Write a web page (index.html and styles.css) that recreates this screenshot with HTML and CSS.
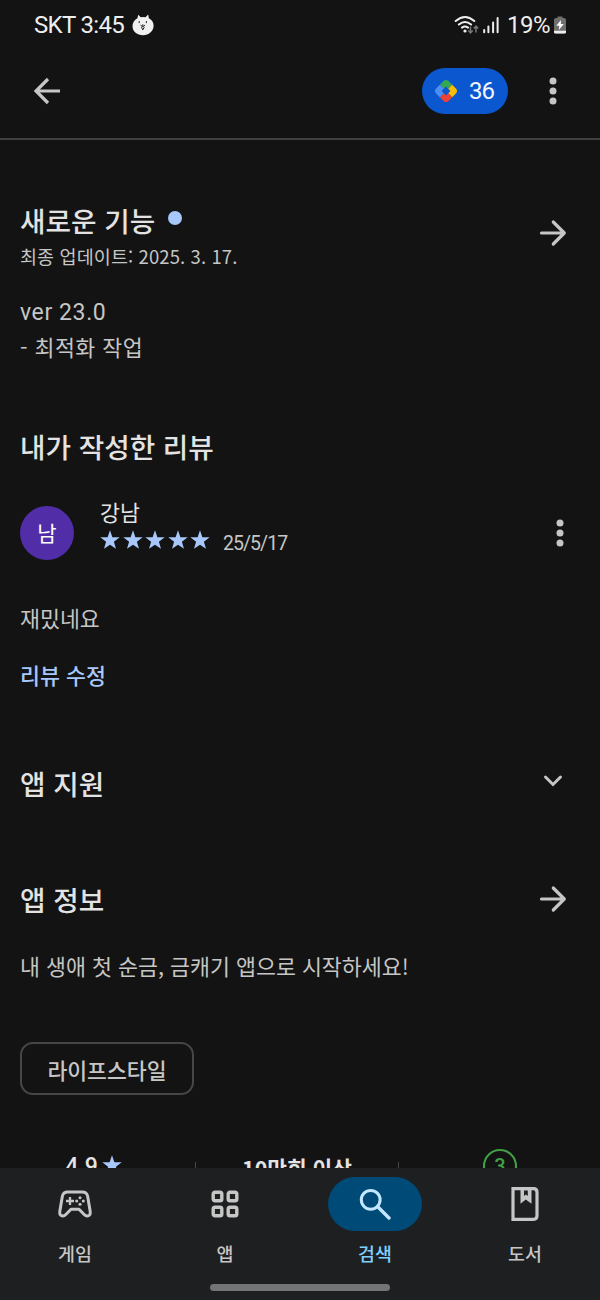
FILE: index.html
```
<!DOCTYPE html>
<html lang="ko">
<head>
<meta charset="utf-8">
<title>앱 세부정보</title>
<link rel="stylesheet" href="styles.css">
</head>
<body>
<svg class="defs" width="0" height="0">
  <symbol id="star" viewBox="0 0 20 20"><path d="M10 .3 12.4 7.2 19.7 7.3 13.9 11.7 16 18.8 10 14.7 4 18.8 6.1 11.7 .3 7.3 7.6 7.2Z"/></symbol>
  <symbol id="forward" viewBox="0 0 28 28"><path d="M2.5 14H25M14.3 3 25.3 14 14.3 25" fill="none" stroke="currentColor" stroke-width="3.2" stroke-linecap="round" stroke-linejoin="round"/></symbol>
  <symbol id="dots" viewBox="0 0 8 28"><circle cx="4" cy="4" r="3.5"/><circle cx="4" cy="14" r="3.5"/><circle cx="4" cy="24" r="3.5"/></symbol>
</svg>
<div class="screen">
  <header class="status">
    <span class="carrier">SKT 3:45</span>
    <svg class="cat" width="22" height="22" viewBox="0 0 22 22">
      <path d="M5.4 4.2 6.3.7 8.7 3.3Q11 2.8 13.5 3.3L16.2.5 16.9 4.3C20.1 6 21.8 8.9 21.6 12.1 21.3 17.6 16.8 21.2 11 21.2S.6 17.7.5 12.3C.4 9 2.2 6 5.4 4.2Z" fill="#f1f1f1"/>
      <g fill="none" stroke="#252525" stroke-width="1"><path d="M7.2 7.1v2M14.4 7.1v2M8.5 11.2l2.3 1.5 2.3-1.5M9.4 13.1l1.4 2.8 1.5-2.8M10.8 10.3v2.4"/></g>
    </svg>
    <svg class="wifi" width="26" height="22" viewBox="0 0 26 22">
      <g fill="none" stroke="#eee" stroke-width="2" stroke-linecap="round"><path d="M1.7 7Q11 -1 20.3 7M4.9 10.5Q11 5.4 17.1 10.5M8 13.6Q11 11.4 14 13.6"/></g>
      <circle cx="11" cy="17" r="1.6" fill="#eee"/>
      <path d="M16.5 12.5v6M14.3 16.5l2.2 2.3 2.2-2.3M22 18.5v-6M19.8 14.5l2.2-2.3 2.2 2.3" fill="none" stroke="#777" stroke-width="1.5"/>
    </svg>
    <svg class="signal" width="16" height="18" viewBox="0 0 16 18"><path d="M1.2 14v2.2M5.4 10.6v5.6M10.1 6.5v9.7M14.6 2v14.2" stroke="#eee" stroke-width="2" stroke-linecap="round"/></svg>
    <span class="percent">19%</span>
    <svg class="battery" width="12" height="18" viewBox="0 0 12 18"><path d="M3.5 2V.5h5V2H10q2 0 2 2v12q0 1.5-1.5 1.5h-9Q0 17.5 0 16V4q0-2 2-2Z" fill="#6f6f6f"/><path d="M0 14.7h12V16q0 1.5-1.5 1.5h-9Q0 17.5 0 16Z" fill="#eee"/><path d="M7 4 2.3 9.7h3L4.8 14l5-6h-3Z" fill="#fff"/></svg>
  </header>

  <div class="toolbar">
    <svg class="back" width="28" height="28" viewBox="0 0 28 28"><path d="M27 14H3M15 2 3 14 15 26" fill="none" stroke="currentColor" stroke-width="3.2"/></svg>
    <div class="points">
      <svg width="24" height="24" viewBox="0 0 24 24">
        <path d="M5.8 5.8 10 1.6Q12 .2 14 1.6L18.2 5.8 14.2 9.8 12 7.6 9.8 9.8Z" fill="#34a853"/>
        <path d="M18.2 5.8 22.4 10Q23.8 12 22.4 14L18.2 18.2 14.2 14.2 16.4 12 14.2 9.8Z" fill="#fbbc04"/>
        <path d="M18.2 18.2 14 22.4Q12 23.8 10 22.4L5.8 18.2 9.8 14.2 12 16.4 14.2 14.2Z" fill="#ea4335"/>
        <path d="M5.8 18.2 1.6 14Q.2 12 1.6 10L5.8 5.8 9.8 9.8 7.6 12 9.8 14.2Z" fill="#4c8df6"/>
      </svg>
      <span>36</span>
    </div>
    <svg class="more" width="8" height="28"><use href="#dots"/></svg>
  </div>

  <main class="content">
    <section class="whats-new">
      <div class="row">
        <div>
          <h2>새로운 기능<i class="new-dot"></i></h2>
          <p class="updated">최종 업데이트: 2025. 3. 17.</p>
        </div>
        <svg class="arrow" width="28" height="28"><use href="#forward"/></svg>
      </div>
      <div class="body notes">
        <p class="version">ver 23.0</p>
        <p class="change">- 최적화 작업</p>
      </div>
    </section>

    <section class="my-review">
      <h2>내가 작성한 리뷰</h2>
      <div class="reviewer">
        <div class="avatar">남</div>
        <div class="who">
          <div class="name">강남</div>
          <div class="rating">
            <svg width="20" height="20"><use href="#star"/></svg><svg width="20" height="20"><use href="#star"/></svg><svg width="20" height="20"><use href="#star"/></svg><svg width="20" height="20"><use href="#star"/></svg><svg width="20" height="20"><use href="#star"/></svg>
            <span class="date">25/5/17</span>
          </div>
        </div>
        <svg class="more" width="8" height="28"><use href="#dots"/></svg>
      </div>
      <p class="body">재밌네요</p>
      <a class="edit">리뷰 수정</a>
    </section>

    <section class="support row">
      <h2>앱 지원</h2>
      <svg class="chevron" width="20" height="14" viewBox="0 0 20 14"><path d="M2.5 3 10 10.5 17.5 3" fill="none" stroke="currentColor" stroke-width="3" stroke-linecap="round"/></svg>
    </section>

    <section class="about">
      <div class="row">
        <h2>앱 정보</h2>
        <svg class="arrow" width="28" height="28"><use href="#forward"/></svg>
      </div>
      <p class="body">내 생애 첫 순금, 금캐기 앱으로 시작하세요!</p>
      <span class="chip">라이프스타일</span>
    </section>

    <div class="stats">
      <div class="stat score"><span>4.9</span><svg width="20" height="20"><use href="#star"/></svg></div>
      <div class="stat downloads">10만회 이상</div>
      <div class="stat"><span class="age">3</span></div>
    </div>
  </main>

  <nav class="tabs">
    <a class="tab">
      <span class="pill"><svg width="36" height="30" viewBox="0 0 36 30">
        <path d="M10.6 3H25.4Q29.6 3 30.6 7L33.2 22.6Q33.7 26.7 30.5 27 28.8 27.2 27.4 25.8L22 20.3H14L8.6 25.8Q7.2 27.2 5.5 27 2.3 26.7 2.8 22.6L5.4 7Q6.4 3 10.6 3Z" fill="none" stroke="currentColor" stroke-width="3" stroke-linejoin="round"/>
        <path d="M9 12h8M13 8v8" stroke="currentColor" stroke-width="2.3"/><g fill="currentColor"><circle cx="23" cy="8.7" r="1.5"/><circle cx="23" cy="15.3" r="1.5"/><circle cx="19.7" cy="12" r="1.5"/><circle cx="26.3" cy="12" r="1.5"/></g>
      </svg></span>
      <span class="label">게임</span>
    </a>
    <a class="tab">
      <span class="pill"><svg width="28" height="28" viewBox="0 0 28 28"><g fill="none" stroke="currentColor" stroke-width="3.4"><rect x="2.2" y="2.2" width="8.6" height="8.6" rx="1.8"/><rect x="17.2" y="2.2" width="8.6" height="8.6" rx="1.8"/><rect x="2.2" y="17.2" width="8.6" height="8.6" rx="1.8"/><rect x="17.2" y="17.2" width="8.6" height="8.6" rx="1.8"/></g></svg></span>
      <span class="label">앱</span>
    </a>
    <a class="tab active">
      <span class="pill"><svg width="32" height="32" viewBox="0 0 32 32"><circle cx="11.7" cy="11.8" r="9.4" fill="none" stroke="currentColor" stroke-width="3"/><path d="M18.5 18.5 30 30" stroke="currentColor" stroke-width="3.4" stroke-linecap="round"/></svg></span>
      <span class="label">검색</span>
    </a>
    <a class="tab">
      <span class="pill"><svg width="28" height="34" viewBox="0 0 28 34"><path d="M2 1.7H22.5Q26 1.7 26 5.2V28.8Q26 32.3 22.5 32.3H2Z" fill="none" stroke="currentColor" stroke-width="3.2"/><path d="M9.5 3V16.8L14.8 12.5 20.5 16.8V3" fill="currentColor"/><path d="M13 3.5h3.8V9L14.9 7.6 13 9Z" fill="#1e1f21"/></svg></span>
      <span class="label">도서</span>
    </a>
    <div class="home-bar"></div>
  </nav>
</div>
</body>
</html>
```

FILE: styles.css
```
* { box-sizing: border-box; }
body { margin: 0; background: #131313; }
.defs { position: absolute; }
h2, p { margin: 0; }
svg { display: block; flex: none; fill: currentColor; }

.screen {
  width: 600px;
  height: 1300px;
  display: flex;
  flex-direction: column;
  overflow: hidden;
  background: #131313;
  color: #c5c6c5;
  font-family: "Noto Sans CJK KR", sans-serif;
}

.status {
  height: 50px;
  display: flex;
  align-items: center;
  padding: 0 34px 0 34px;
  font: 24px/50px Roboto, sans-serif;
  color: #eee;
}
.carrier { letter-spacing: -0.65px; }
.cat { margin-left: 8px; }
.wifi { margin: 0 3px 0 auto; }
.percent { margin: 0 4px 0 8px; letter-spacing: -0.5px; }

.toolbar {
  height: 90px;
  display: flex;
  align-items: center;
  padding: 0 43px 7px 33px;
  border-bottom: 2px solid #404040;
}
.points {
  width: 86px;
  height: 46px;
  margin: 0 41px 0 auto;
  padding-left: 12px;
  display: flex;
  align-items: center;
  gap: 11px;
  border-radius: 23px;
  background: #0b57d0;
  color: #f2f6ff;
  font: 24px/46px Roboto, sans-serif;
  letter-spacing: -0.9px;
}

.content {
  flex: 1;
  min-height: 0;
  overflow: hidden;
  padding: 0 20px;
}
.row { display: flex; align-items: center; justify-content: space-between; }
h2 {
  display: flex;
  align-items: center;
  font-size: 27.7px;
  font-weight: 500;
  line-height: 40px;
  color: #e3e3e3;
}
.new-dot { width: 14px; height: 14px; margin: 0 0 5px 13px; border-radius: 50%; background: #a8c7fa; }
.arrow { margin-right: 13px; }
.body { font-size: 21.7px; line-height: 36px; }

.whats-new { padding-top: 60px; height: 286px; }
.whats-new .arrow { margin-bottom: 5px; }
.updated { margin-top: 1px; font-size: 18.5px; line-height: 30px; letter-spacing: 0.1px; }
.notes { padding-top: 24px; }
.version { font-family: Roboto, sans-serif; font-size: 23px; letter-spacing: 0.6px; }
.change { margin-top: -2px; letter-spacing: 0.45px; }

.reviewer { display: flex; align-items: center; height: 60px; margin-top: 36px; padding-right: 16px; }
.reviewer .more { margin-top: 2px; }
.avatar {
  width: 54px;
  height: 54px;
  margin-top: 1px;
  border-radius: 50%;
  background: #512da8;
  color: #fff;
  font-size: 21px;
  line-height: 52px;
  text-align: center;
}
.who { flex: 1; padding: 0 0 9px 26px; }
.name { font-size: 21.7px; line-height: 28px; color: #e3e3e3; }
.rating { display: flex; gap: 2.6px; height: 32px; color: #a8c7fa; }
.rating svg { margin-top: 4px; }
.date { margin-left: 10px; font: 19.5px/36px Roboto, sans-serif; letter-spacing: -0.95px; color: #c5c6c5; }
.my-review .body { margin-top: 38px; }
.edit { display: block; margin-top: 21px; font-size: 21.7px; font-weight: 500; line-height: 36px; color: #a8c7fa; }

.support { margin-top: 70px; }
.chevron { margin: 0 17px 5px 0; }
.about { margin-top: 76px; }
.about .body { margin-top: 29px; }
.chip {
  display: block;
  width: 174px;
  height: 53px;
  margin-top: 58px;
  border: 2px solid #454746;
  border-radius: 13px;
  font-size: 21.6px;
  font-weight: 500;
  line-height: 51px;
  text-align: center;
}

.stats { display: flex; margin: 53px 0 0 -28px; color: #e3e3e3; }
.stat { flex: none; width: 203px; height: 60px; display: flex; justify-content: center; font-weight: 500; }
.stat + .stat { border-image: linear-gradient(transparent 15px, #454746 15px) 1; border-left: 1px solid; }
.score { font: 500 23px/38px Roboto, sans-serif; }
.score svg { margin: 7px 0 0 4px; color: #a8c7fa; }
.downloads { font-size: 21.4px; font-weight: 700; line-height: 39px; }
.age { width: 34px; height: 34px; margin-top: 1px; border: 2px solid #43a047; border-radius: 50%; color: #43a047; font: 500 20px/31px Roboto, sans-serif; text-align: center; }

.tabs {
  height: 132px;
  flex: none;
  display: grid;
  grid-template-columns: repeat(4, 150px);
  grid-template-rows: 116px 7px;
  background: #1e1f21;
}
.tab { display: flex; flex-direction: column; align-items: center; padding-top: 9px; }
.pill { width: 94px; height: 54px; display: flex; align-items: center; justify-content: center; border-radius: 27px; }
.label { margin-top: 7px; font-size: 18.4px; font-weight: 500; line-height: 30px; }
.active .pill { background: #004a77; color: #c2e7ff; }
.active .label { color: #7fcfff; }
.home-bar { grid-column: 1 / -1; width: 180px; height: 7px; margin: 0 auto; border-radius: 4px; background: #737574; }
```
